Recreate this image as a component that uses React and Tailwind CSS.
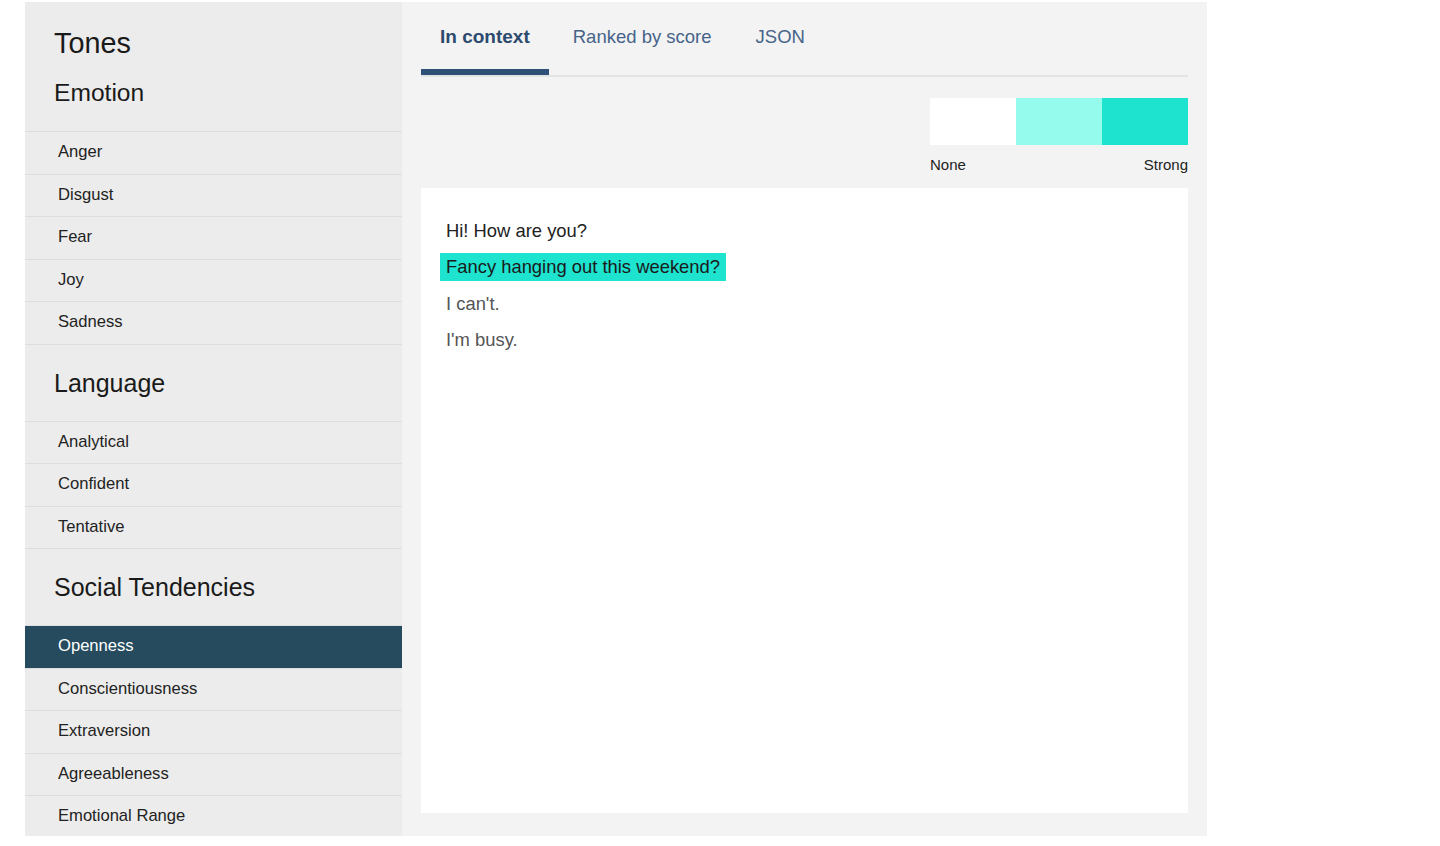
import React, { useState } from "react";

const sections = [
  { title: "Emotion", items: ["Anger", "Disgust", "Fear", "Joy", "Sadness"] },
  { title: "Language", items: ["Analytical", "Confident", "Tentative"] },
  {
    title: "Social Tendencies",
    items: ["Openness", "Conscientiousness", "Extraversion", "Agreeableness", "Emotional Range"],
  },
];

const sentences = [
  { text: "Hi! How are you?", tone: "none", color: "text-[#222]" },
  { text: "Fancy hanging out this weekend?", tone: "strong", color: "text-[#1a1a1a]" },
  { text: "I can't.", tone: "none", color: "text-[#555]" },
  { text: "I'm busy.", tone: "none", color: "text-[#555]" },
];

const tabs = ["In context", "Ranked by score", "JSON"];

function Row({ label, active, onClick }) {
  return (
    <button
      onClick={onClick}
      className={`w-full h-[42.5px] flex items-center pl-[33px] text-left text-[16.6px] border-t border-[#dedede] ${
        active ? "bg-[#264b5f] text-white border-[#264b5f]" : "text-[#222]"
      }`}
    >
      {label}
    </button>
  );
}

export default function App() {
  const [selected, setSelected] = useState("Openness");
  const [tab, setTab] = useState(0);

  return (
    <div className="min-h-screen bg-white font-['Liberation_Sans',Arial,sans-serif]">
      <div className="ml-[25px] mt-[2px] w-[1182px] h-[834px] flex">
        {/* sidebar */}
        <aside className="w-[377px] bg-[#ececec] flex flex-col overflow-hidden">
          {sections.map((s, i) => (
            <div key={s.title}>
              {i === 0 ? (
                <div className="h-[129px] pl-[29px] pt-[25px]">
                  <h1 className="text-[28.8px] leading-[32px] text-[#1a1a1a]">Tones</h1>
                  <h2 className="mt-[18px] text-[24.6px] leading-[32px] text-[#1a1a1a]">{s.title}</h2>
                </div>
              ) : (
                <div className="h-[77px] pl-[29px] flex items-center border-t border-[#dedede]">
                  <h2 className="text-[25px] leading-[32px] text-[#1a1a1a]">{s.title}</h2>
                </div>
              )}
              {s.items.map((it) => (
                <Row key={it} label={it} active={selected === it} onClick={() => setSelected(it)} />
              ))}
            </div>
          ))}
        </aside>

        {/* main panel */}
        <main className="flex-1 bg-[#f3f3f3] px-[19px] pb-[23px] flex flex-col">
          <nav className="h-[75px] flex border-b-2 border-[#e3e3e3]">
            {tabs.map((t, i) => (
              <button
                key={t}
                onClick={() => setTab(i)}
                className={`h-full px-[19px] pt-[22px] flex items-start leading-[26px] border-b-[6px] -mb-[2px] ${
                  i === 0 ? "mr-[5px] text-[19px]" : "mr-[6px] text-[18.5px]"
                } ${
                  tab === i
                    ? "font-bold text-[#2c4a6e] border-[#2e5077]"
                    : "text-[#46648a] border-transparent"
                }`}
              >
                {t}
              </button>
            ))}
          </nav>

          <div className="flex flex-col items-end pt-[21px]">
            <div className="flex">
              <div className="w-[86px] h-[47px] bg-white" />
              <div className="w-[86px] h-[47px] bg-[#95fbec]" />
              <div className="w-[86px] h-[47px] bg-[#1de3cf]" />
            </div>
            <div className="w-[258px] flex justify-between mt-[11px] text-[15px] leading-[18px] text-[#222]">
              <span>None</span>
              <span>Strong</span>
            </div>
          </div>

          <section className="mt-[14px] flex-1 bg-white pt-[29px] pl-[19px] flex flex-col items-start gap-[8.3px]">
            {sentences.map((s) => (
              <span
                key={s.text}
                className={`px-[6px] h-[28px] flex items-center text-[18.4px] ${s.color} ${
                  s.tone === "strong" ? "bg-[#1de3cf]" : ""
                }`}
              >
                {s.text}
              </span>
            ))}
          </section>
        </main>
      </div>
    </div>
  );
}
